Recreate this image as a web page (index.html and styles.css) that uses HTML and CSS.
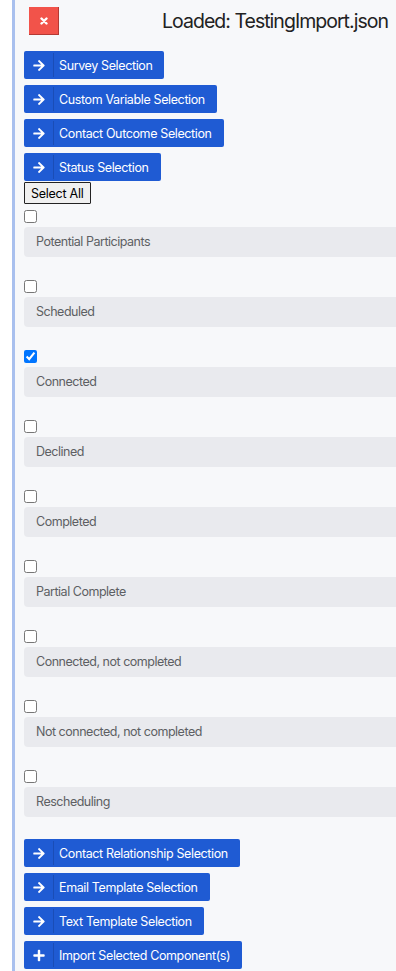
FILE: index.html
```html
<!DOCTYPE html>
<html lang="en">
<head>
  <meta charset="UTF-8">
  <title>Import Components</title>
  <link rel="stylesheet" href="styles.css">
</head>
<body>

  <div class="page">
    <div class="panel">

      <div class="header">
        <button class="btn-close" title="Close">
          <svg width="8" height="8" viewBox="0 0 8 8"><path d="M1.5 1.5l5 5M6.5 1.5l-5 5" stroke="#fff" stroke-width="2.4" stroke-linecap="round"/></svg>
        </button>
        <h2 class="file-name">Loaded: TestingImport.json</h2>
      </div>

      <div class="btn-stack">
        <button class="btn">
          <span class="btn-icon"><svg class="arrow" viewBox="0 0 448 512"><path d="M190.5 66.9l22.2-22.2c9.4-9.4 24.6-9.4 33.9 0L441 239c9.4 9.4 9.4 24.6 0 33.9L246.6 467.3c-9.4 9.4-24.6 9.4-33.9 0l-22.2-22.2c-9.5-9.5-9.3-25 .4-34.3L311.4 296H24c-13.3 0-24-10.7-24-24v-32c0-13.3 10.7-24 24-24h287.4L190.9 101.2c-9.8-9.3-10-24.8-.4-34.3z"/></svg></span>
          <span class="btn-label">Survey Selection</span>
        </button>
        <button class="btn">
          <span class="btn-icon"><svg class="arrow" viewBox="0 0 448 512"><path d="M190.5 66.9l22.2-22.2c9.4-9.4 24.6-9.4 33.9 0L441 239c9.4 9.4 9.4 24.6 0 33.9L246.6 467.3c-9.4 9.4-24.6 9.4-33.9 0l-22.2-22.2c-9.5-9.5-9.3-25 .4-34.3L311.4 296H24c-13.3 0-24-10.7-24-24v-32c0-13.3 10.7-24 24-24h287.4L190.9 101.2c-9.8-9.3-10-24.8-.4-34.3z"/></svg></span>
          <span class="btn-label">Custom Variable Selection</span>
        </button>
        <button class="btn">
          <span class="btn-icon"><svg class="arrow" viewBox="0 0 448 512"><path d="M190.5 66.9l22.2-22.2c9.4-9.4 24.6-9.4 33.9 0L441 239c9.4 9.4 9.4 24.6 0 33.9L246.6 467.3c-9.4 9.4-24.6 9.4-33.9 0l-22.2-22.2c-9.5-9.5-9.3-25 .4-34.3L311.4 296H24c-13.3 0-24-10.7-24-24v-32c0-13.3 10.7-24 24-24h287.4L190.9 101.2c-9.8-9.3-10-24.8-.4-34.3z"/></svg></span>
          <span class="btn-label">Contact Outcome Selection</span>
        </button>
        <button class="btn">
          <span class="btn-icon"><svg class="arrow" viewBox="0 0 448 512"><path d="M190.5 66.9l22.2-22.2c9.4-9.4 24.6-9.4 33.9 0L441 239c9.4 9.4 9.4 24.6 0 33.9L246.6 467.3c-9.4 9.4-24.6 9.4-33.9 0l-22.2-22.2c-9.5-9.5-9.3-25 .4-34.3L311.4 296H24c-13.3 0-24-10.7-24-24v-32c0-13.3 10.7-24 24-24h287.4L190.9 101.2c-9.8-9.3-10-24.8-.4-34.3z"/></svg></span>
          <span class="btn-label">Status Selection</span>
        </button>
      </div>

      <button class="select-all">Select All</button>

      <div class="status-list">
        <div class="status-item">
          <input type="checkbox">
          <div class="status-name">Potential Participants</div>
        </div>
        <div class="status-item">
          <input type="checkbox">
          <div class="status-name">Scheduled</div>
        </div>
        <div class="status-item">
          <input type="checkbox" checked>
          <div class="status-name">Connected</div>
        </div>
        <div class="status-item">
          <input type="checkbox">
          <div class="status-name">Declined</div>
        </div>
        <div class="status-item">
          <input type="checkbox">
          <div class="status-name">Completed</div>
        </div>
        <div class="status-item">
          <input type="checkbox">
          <div class="status-name">Partial Complete</div>
        </div>
        <div class="status-item">
          <input type="checkbox">
          <div class="status-name">Connected, not completed</div>
        </div>
        <div class="status-item">
          <input type="checkbox">
          <div class="status-name">Not connected, not completed</div>
        </div>
        <div class="status-item">
          <input type="checkbox">
          <div class="status-name">Rescheduling</div>
        </div>
      </div>

      <div class="btn-stack bottom">
        <button class="btn">
          <span class="btn-icon"><svg class="arrow" viewBox="0 0 448 512"><path d="M190.5 66.9l22.2-22.2c9.4-9.4 24.6-9.4 33.9 0L441 239c9.4 9.4 9.4 24.6 0 33.9L246.6 467.3c-9.4 9.4-24.6 9.4-33.9 0l-22.2-22.2c-9.5-9.5-9.3-25 .4-34.3L311.4 296H24c-13.3 0-24-10.7-24-24v-32c0-13.3 10.7-24 24-24h287.4L190.9 101.2c-9.8-9.3-10-24.8-.4-34.3z"/></svg></span>
          <span class="btn-label">Contact Relationship Selection</span>
        </button>
        <button class="btn">
          <span class="btn-icon"><svg class="arrow" viewBox="0 0 448 512"><path d="M190.5 66.9l22.2-22.2c9.4-9.4 24.6-9.4 33.9 0L441 239c9.4 9.4 9.4 24.6 0 33.9L246.6 467.3c-9.4 9.4-24.6 9.4-33.9 0l-22.2-22.2c-9.5-9.5-9.3-25 .4-34.3L311.4 296H24c-13.3 0-24-10.7-24-24v-32c0-13.3 10.7-24 24-24h287.4L190.9 101.2c-9.8-9.3-10-24.8-.4-34.3z"/></svg></span>
          <span class="btn-label">Email Template Selection</span>
        </button>
        <button class="btn">
          <span class="btn-icon"><svg class="arrow" viewBox="0 0 448 512"><path d="M190.5 66.9l22.2-22.2c9.4-9.4 24.6-9.4 33.9 0L441 239c9.4 9.4 9.4 24.6 0 33.9L246.6 467.3c-9.4 9.4-24.6 9.4-33.9 0l-22.2-22.2c-9.5-9.5-9.3-25 .4-34.3L311.4 296H24c-13.3 0-24-10.7-24-24v-32c0-13.3 10.7-24 24-24h287.4L190.9 101.2c-9.8-9.3-10-24.8-.4-34.3z"/></svg></span>
          <span class="btn-label">Text Template Selection</span>
        </button>
        <button class="btn">
          <span class="btn-icon"><svg class="arrow" viewBox="0 0 448 512"><path d="M416 208H272V64c0-17.670-14.330-32-32-32h-32c-17.670 0-32 14.330-32 32v144H32c-17.670 0-32 14.330-32 32v32c0 17.670 14.330 32 32 32h144v144c0 17.670 14.330 32 32 32h32c17.670 0 32-14.330 32-32V304h144c17.670 0 32-14.330 32-32v-32c0-17.670-14.330-32-32-32z"/></svg></span>
          <span class="btn-label">Import Selected Component(s)</span>
        </button>
      </div>

    </div>
  </div>

</body>
</html>
```

FILE: styles.css
```css
body {
  margin: 0;
  background: #fff;
  font-family: Inter, "Liberation Sans", sans-serif;
  letter-spacing: -0.03em;
  overflow: hidden;
}
.page {
  padding-left: 12px;
}
.panel {
  border-left: 3px solid #a9c0ee;
  background: #f7f8fa;
  padding: 7px 0 2px 9px;
  min-height: 971px;
  box-sizing: border-box;
}
.header {
  display: flex;
  align-items: center;
  justify-content: space-between;
  padding-right: 8px;
  margin-bottom: 16px;
}
.btn-close {
  width: 30px;
  height: 28px;
  margin-left: 5px;
  padding: 0;
  border: none;
  border-right: 1px solid #b43a34;
  border-bottom: 1px solid #b43a34;
  background: #f2534a;
  display: flex;
  align-items: center;
  justify-content: center;
}
.file-name {
  margin: 0;
  font-size: 19.5px;
  font-weight: 400;
  letter-spacing: -0.05em;
  color: #222;
}
.btn-stack {
  display: flex;
  flex-direction: column;
  align-items: flex-start;
  gap: 6px;
}
.btn-stack.bottom {
  margin-top: 22px;
}
.btn {
  display: inline-flex;
  align-items: stretch;
  height: 28px;
  padding: 0;
  border: none;
  border-radius: 2px;
  background: #1f5bd3;
  color: #fff;
  font-family: Inter, "Liberation Sans", sans-serif;
  font-size: 12.5px;
  letter-spacing: -0.03em;
}
.btn-icon {
  width: 29px;
  display: flex;
  align-items: center;
  justify-content: center;
  border-right: 1px solid #1a4db6;
  margin: 2px 0;
}
.arrow {
  width: 12px;
  height: 13px;
  fill: #fff;
}
.btn-label {
  display: flex;
  align-items: center;
  padding: 0 12px 0 5px;
}
.select-all {
  display: block;
  height: 22px;
  padding: 0 6px;
  margin-top: 1px;
  border: 1px solid #222;
  border-radius: 1px;
  background: #f0f0f0;
  font-family: Inter, "Liberation Sans", sans-serif;
  font-size: 12.5px;
  letter-spacing: -0.02em;
  color: #000;
}
.status-item {
  padding-top: 6px;
}
.status-item input {
  display: block;
  width: 13px;
  height: 13px;
  margin: 0 0 4px;
}
.status-name {
  height: 30px;
  line-height: 30px;
  margin-right: -30px;
  margin-bottom: 17px;
  padding-left: 12px;
  border-radius: 4px;
  background: #e9eaee;
  color: #5d5f63;
  font-size: 12.5px;
}
```
